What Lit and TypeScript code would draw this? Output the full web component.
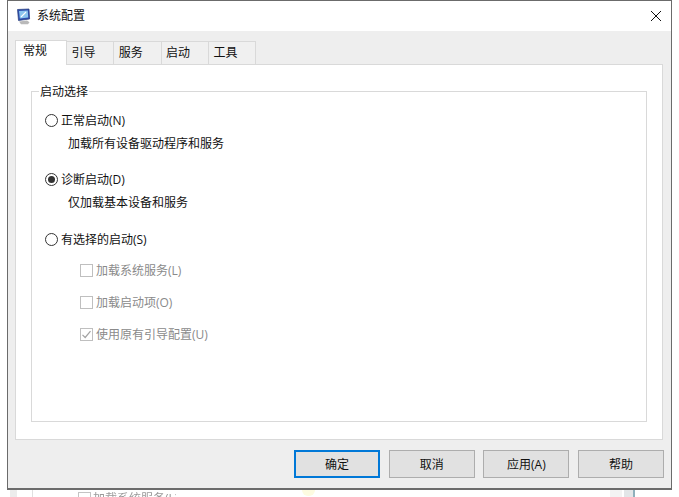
import { LitElement, html, svg, css } from "lit";
import { customElement } from "lit/decorators.js";

@customElement("app-root")
export class AppRoot extends LitElement {
  static styles = css`
    :host {
      display: block;
      width: 679px;
      height: 497px;
      overflow: hidden;
      background: #fff;
      font-family: "Open Sans", "Noto Sans CJK SC", sans-serif;
      font-size: 12px;
      color: #111;
    }
    .window {
      box-sizing: border-box;
      margin-left: 7px;
      width: 665px;
      height: 490px;
      border: 1px solid #6b6b6b;
      border-bottom-width: 2px;
      background: #eeeeee;
      display: flex;
      flex-direction: column;
    }
    .title {
      height: 30px;
      flex: none;
      background: #fff;
      display: flex;
      align-items: center;
      padding-left: 8px;
      padding-right: 9px;
      gap: 5px;
    }
    .title .name { flex: 1; font-size: 12px; line-height: 18px; margin-top: -1px; }
    .close { margin-top: -1px; }
    .body {
      flex: 1;
      display: flex;
      flex-direction: column;
      padding: 9px 7px 0 7px;
    }
    .tabs {
      display: flex;
      align-items: flex-end;
      height: 25px;
      position: relative;
      z-index: 1;
      flex: none;
    }
    .tab {
      box-sizing: border-box;
      width: 47.3px;
      height: 23px;
      margin-bottom: 1px;
      border: 1px solid #d9d9d9;
      border-left: none;
      border-bottom: none;
      background: #f0f0f0;
      padding: 2px 0 0 4.5px;
      line-height: 18px;
    }
    .tab.active {
      width: 52px;
      height: 25px;
      margin-bottom: 0;
      background: #fff;
      border-left: 1px solid #d9d9d9;
      padding: 1px 0 0 7px;
    }
    .panel {
      box-sizing: border-box;
      width: 648px;
      height: 376px;
      margin-top: -1px;
      background: #fff;
      border: 1px solid #d9d9d9;
      padding: 26px 15px 0 15px;
      flex: none;
    }
    .group {
      box-sizing: border-box;
      height: 331px;
      border: 1px solid #d9d9d9;
      padding: 18px 0 0 13px;
      position: relative;
    }
    .legend {
      position: absolute;
      left: 7px;
      top: -8px;
      background: #fff;
      padding: 0 1px;
      line-height: 16px;
    }
    .opt {
      display: flex;
      align-items: center;
      gap: 3px;
      height: 20px;
    }
    .radio { width: 13px; height: 13px; flex: none; display: block; }
    .desc { padding-left: 23px; line-height: 18px; height: 18px; margin-top: 5px; }
    .gap1 { height: 16px; }
    .gap2 { height: 17px; }
    .checks { padding: 11px 0 0 35px; }
    .chk {
      display: flex;
      align-items: center;
      gap: 3px;
      height: 20px;
      color: #8a8a8a;
      margin-bottom: 12px;
    }
    .box { width: 13px; height: 13px; flex: none; display: block; }
    .buttons {
      display: flex;
      padding-top: 10px;
      padding-left: 279px;
      gap: 8.7px;
    }
    .btn {
      box-sizing: border-box;
      flex: none;
      width: 86px;
      height: 28px;
      background: #e1e1e1;
      border: 1px solid #adadad;
      display: flex;
      align-items: center;
      justify-content: center;
      font: inherit;
      color: #111;
      padding: 0;
    }
    .btn.def { border: 2px solid #0078d7; }
    .strip {
      height: 7px;
      overflow: hidden;
      display: flex;
      padding-left: 10px;
      color: #9a9a9a;
      font-size: 12px;
      line-height: 16px;
    }
    .s-col { flex: none; width: 7px; height: 7px; background: #ececec; }
    .s-line { flex: none; width: 1px; height: 7px; background: #e0e0e0; margin-left: 15px; }
    .s-sq {
      flex: none;
      box-sizing: border-box;
      width: 13px;
      height: 13px;
      margin: 2px 2px 0 45px;
      border: 1px solid #c4c4c4;
    }
    .s-text { flex: none; width: 83px; overflow: hidden; white-space: nowrap; margin-top: 1px; filter: blur(0.5px); }
    .s-yellow {
      flex: none;
      width: 13px;
      height: 6px;
      margin-left: 126px;
      background: #fdfbe0;
      border-radius: 0 0 8px 8px;
    }
    .s-grey1 { flex: none; width: 12px; height: 7px; margin-left: 295px; background: #f3f3f3; }
    .s-grey2 { flex: none; width: 9px; height: 7px; margin-left: 2px; background: #e3e6e8; }
    .s-teal { flex: none; width: 2px; height: 7px; background: #8fb0bc; }
  `;

  private radio(on: boolean) {
    return html`<svg class="radio" viewBox="0 0 13 13">
      <circle cx="6.5" cy="6.5" r="6" fill="#fff" stroke="#333" stroke-width="1"></circle>
      ${on ? svg`<circle cx="6.5" cy="6.5" r="3.5" fill="#333"></circle>` : ""}
    </svg>`;
  }

  private check(label: string, on = false) {
    return html`<div class="chk">
      <svg class="box" viewBox="0 0 13 13">
        <rect x=".5" y=".5" width="12" height="12" fill="#fff" stroke="#bfbfbf"></rect>
        ${on ? svg`<path d="M2.5 6.8 5.2 9.5 10.5 3.2" fill="none" stroke="#a3a3a3" stroke-width="1.2"></path>` : ""}
      </svg>
      <span>${label}</span>
    </div>`;
  }

  render() {
    return html`
      <div class="window">
        <div class="title">
          <svg width="16" height="17" viewBox="0 0 16 17">
            <path d="M1.5 1.5 13 1l.6 10L2.5 12.5z" fill="#2f4fae" stroke="#24397a" stroke-width=".7"></path>
            <path d="M3 3 11.8 2.6l.4 7-8.3.9z" fill="#8cc6ef"></path>
            <path d="M5 9 10 4" stroke="#fff" stroke-width="1.1"></path>
            <path d="M3 13.5l8-1 2.5 1.7-1.5 2H5z" fill="#b9b9b9"></path>
          </svg>
          <span class="name">系统配置</span>
          <svg class="close" width="12" height="12" viewBox="0 0 12 12">
            <path d="M1 1 11 11M11 1 1 11" stroke="#111" stroke-width="1" fill="none"></path>
          </svg>
        </div>
        <div class="body">
          <div class="tabs">
            <div class="tab active">常规</div>
            <div class="tab">引导</div>
            <div class="tab">服务</div>
            <div class="tab">启动</div>
            <div class="tab">工具</div>
          </div>
          <div class="panel">
            <div class="group">
              <div class="legend">启动选择</div>
              <div class="opt">${this.radio(false)}<span>正常启动(N)</span></div>
              <div class="desc">加载所有设备驱动程序和服务</div>
              <div class="gap1"></div>
              <div class="opt">${this.radio(true)}<span>诊断启动(D)</span></div>
              <div class="desc">仅加载基本设备和服务</div>
              <div class="gap2"></div>
              <div class="opt">${this.radio(false)}<span>有选择的启动(S)</span></div>
              <div class="checks">
                ${this.check("加载系统服务(L)")}
                ${this.check("加载启动项(O)")}
                ${this.check("使用原有引导配置(U)", true)}
              </div>
            </div>
          </div>
          <div class="buttons">
            <button class="btn def">确定</button>
            <button class="btn">取消</button>
            <button class="btn">应用(A)</button>
            <button class="btn">帮助</button>
          </div>
        </div>
      </div>
      <div class="strip">
        <span class="s-col"></span>
        <span class="s-line"></span>
        <span class="s-sq"></span>
        <span class="s-text">加载系统服务(L)</span>
        <span class="s-yellow"></span>
        <span class="s-grey1"></span>
        <span class="s-grey2"></span>
        <span class="s-teal"></span>
      </div>
    `;
  }
}
